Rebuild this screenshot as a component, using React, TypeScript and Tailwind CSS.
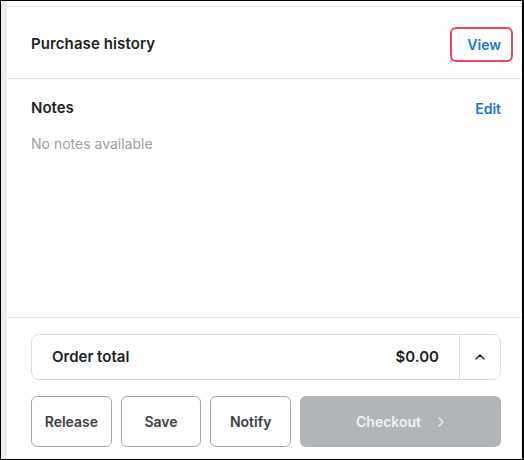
import { ChevronUp, ChevronRight } from 'lucide-react'

const font = { fontFamily: 'Inter, "Noto Sans", sans-serif' }

const SideButton = ({ label }: { label: string }) => (
  <button className="h-[51px] flex-1 rounded-md border border-[#a3a7ab] bg-white text-[14px] font-semibold text-[#3c4043]">
    {label}
  </button>
)

export default function App() {
  return (
    <div
      className="w-[524px] h-[460px] border border-black border-r-2 bg-white text-[#1f1f1f] overflow-hidden"
      style={font}
    >
      <div className="h-full flex flex-col border-l-[6px] border-[#ececec]">
        <div className="h-[6px] border-b border-[#e3e3e3] shrink-0" />

        <div className="h-[72px] shrink-0 flex items-center justify-between pt-[3px] pl-6 pr-[21px] border-b border-[#e3e3e3]">
          <h3 className="text-[15px] font-semibold tracking-[0.1px]">Purchase history</h3>
          <button className="-mr-3 pl-[15px] pr-[10px] py-[5px] rounded-md border-2 border-[#f0445a] text-[14px] font-semibold text-[#1a73e8]">
            View
          </button>
        </div>

        <div className="flex-1 pl-6 pr-[21px] pt-[18px]">
          <div className="flex items-center justify-between">
            <h3 className="text-[15px] font-semibold">Notes</h3>
            <button className="text-[14px] font-semibold text-[#1a73e8]">Edit</button>
          </div>
          <p className="mt-[13px] text-[14px] text-[#9aa0a6]">No notes available</p>
        </div>

        <div className="shrink-0 border-t border-[#e3e3e3] pl-6 pr-[21px] pt-4 pb-3">
          <div className="h-[46px] flex items-center rounded-lg border border-[#dadce0]">
            <span className="pl-5 text-[15px] font-semibold">Order total</span>
            <span className="ml-auto pr-5 text-[15px] font-semibold">$0.00</span>
            <div className="h-full w-[41px] flex items-center justify-center border-l border-[#dadce0]">
              <ChevronUp size={16} strokeWidth={2.2} />
            </div>
          </div>

          <div className="mt-4 flex gap-[9px]">
            <SideButton label="Release" />
            <SideButton label="Save" />
            <SideButton label="Notify" />
            <button className="h-[51px] w-[201px] shrink-0 flex items-center justify-center gap-3 rounded-md bg-[#b1b5b9] pl-1 text-[14px] font-semibold text-[#f1f3f4]">
              Checkout
              <ChevronRight size={16} strokeWidth={2} />
            </button>
          </div>
        </div>
      </div>
    </div>
  )
}
